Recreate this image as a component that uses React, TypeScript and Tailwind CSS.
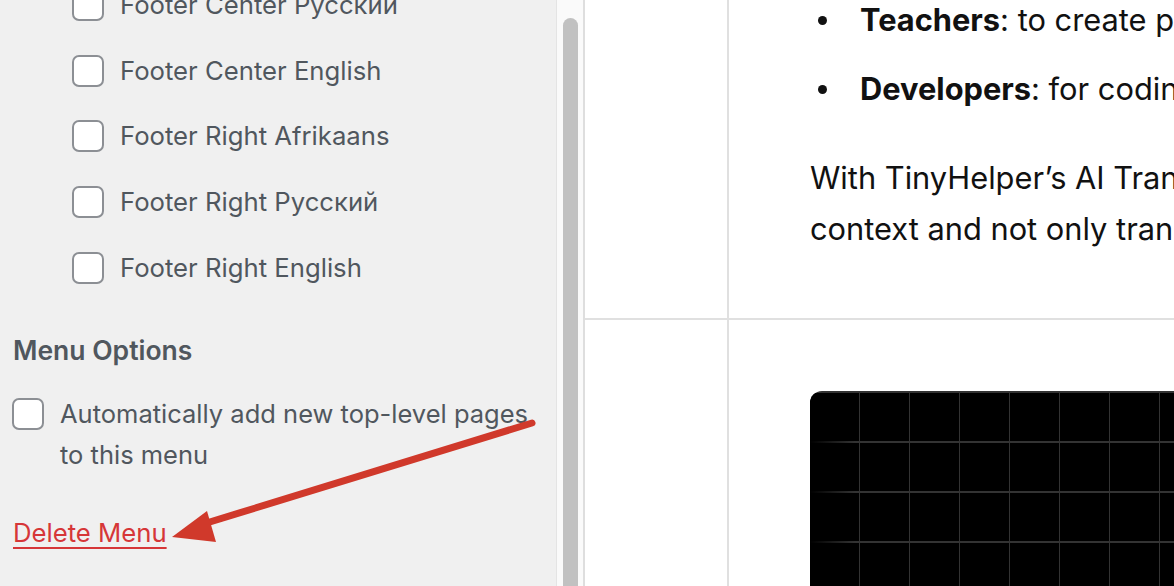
import React from "react";

const items = [
  "Footer Center Русский",
  "Footer Center English",
  "Footer Right Afrikaans",
  "Footer Right Русский",
  "Footer Right English",
];

function Box() {
  return (
    <span className="block w-[32px] h-[32px] shrink-0 rounded-[7px] border-2 border-[#8c8f94] bg-white" />
  );
}

export default function App() {
  return (
    <div className="relative flex w-[1174px] h-[586px] overflow-hidden bg-white font-['Inter','Liberation_Sans',sans-serif]">
      {/* left settings panel */}
      <div className="w-[557px] shrink-0 bg-[#f0f0f0] border-r border-[#e4e4e4] text-[#50575e]">
        <div className="-mt-[28px] pl-[72px]">
          {items.map((label) => (
            <div key={label} className="h-[65.7px] flex items-center gap-[16px]">
              <Box />
              <span className="text-[25.7px] leading-none">{label}</span>
            </div>
          ))}
        </div>
        <div className="px-[13px]">
          <h3 className="mt-[33px] text-[26.5px] leading-[34px] font-semibold text-[#50575e]">
            Menu Options
          </h3>
          <div className="mt-[26px] flex items-start gap-[16px]">
            <div className="mt-[5px] shrink-0 -ml-[1px]">
              <Box />
            </div>
            <p className="text-[25.5px] leading-[41px]">
              Automatically add new top-level pages
              <br />
              to this menu
            </p>
          </div>
          <a className="mt-[41px] block text-[25.7px] leading-[34px] text-[#d63638] underline underline-offset-[5px]">
            Delete Menu
          </a>
        </div>
      </div>

      {/* scrollbar */}
      <div className="w-[28px] shrink-0 bg-[#fafafa] pt-[18px] pl-[6px] border-r-2 border-[#dedede]">
        <div className="w-[15px] h-full rounded-t-full bg-[#c1c1c1]" />
      </div>

      {/* content table */}
      <div className="flex-1 grid grid-cols-[144px_1fr] grid-rows-[320px_1fr]">
        <div className="border-r-2 border-b-2 border-[#e0e0e0]" />
        <div className="border-b-2 border-[#e0e0e0] pl-[83px] text-[#111] text-[30.8px] overflow-hidden whitespace-nowrap">
          <ul className="-mt-[1px]">
            <li className="h-[42px] flex items-center">
              <span className="shrink-0 w-[9px] h-[9px] rounded-full bg-[#111] ml-[6px] mr-[33px]" />
              <span>
                <b className="font-bold">Teachers</b>: to create p
              </span>
            </li>
            <li className="mt-[27px] h-[42px] flex items-center">
              <span className="shrink-0 w-[9px] h-[9px] rounded-full bg-[#111] ml-[6px] mr-[33px]" />
              <span>
                <b className="font-bold">Developers</b>: for codin
              </span>
            </li>
          </ul>
          <p className="mt-[42px] -ml-[2px] leading-[51px]">
            With TinyHelper’s AI Tran
            <br />
            context and not only tran
          </p>
        </div>
        <div className="border-r-2 border-[#e0e0e0]" />
        <div className="pl-[81px] pt-[71px] overflow-hidden">
          <div className="relative w-[420px] h-[300px] rounded-tl-[12px] overflow-hidden bg-black bg-[linear-gradient(to_right,transparent_49px,#333_49px),linear-gradient(to_bottom,#333_2px,transparent_2px)] bg-[size:50px_50px]">
            <div className="absolute left-0 top-[2px] bottom-0 w-[45px] bg-gradient-to-r from-black to-transparent" />
          </div>
        </div>
      </div>

      {/* annotation arrow */}
      <svg className="absolute left-0 top-0 pointer-events-none" width="1174" height="586">
        <line x1="532" y1="423" x2="200" y2="525" stroke="#d0392b" strokeWidth="7" strokeLinecap="round" />
        <polygon points="172,537 207,511 216,542" fill="#d0392b" />
      </svg>
    </div>
  );
}
